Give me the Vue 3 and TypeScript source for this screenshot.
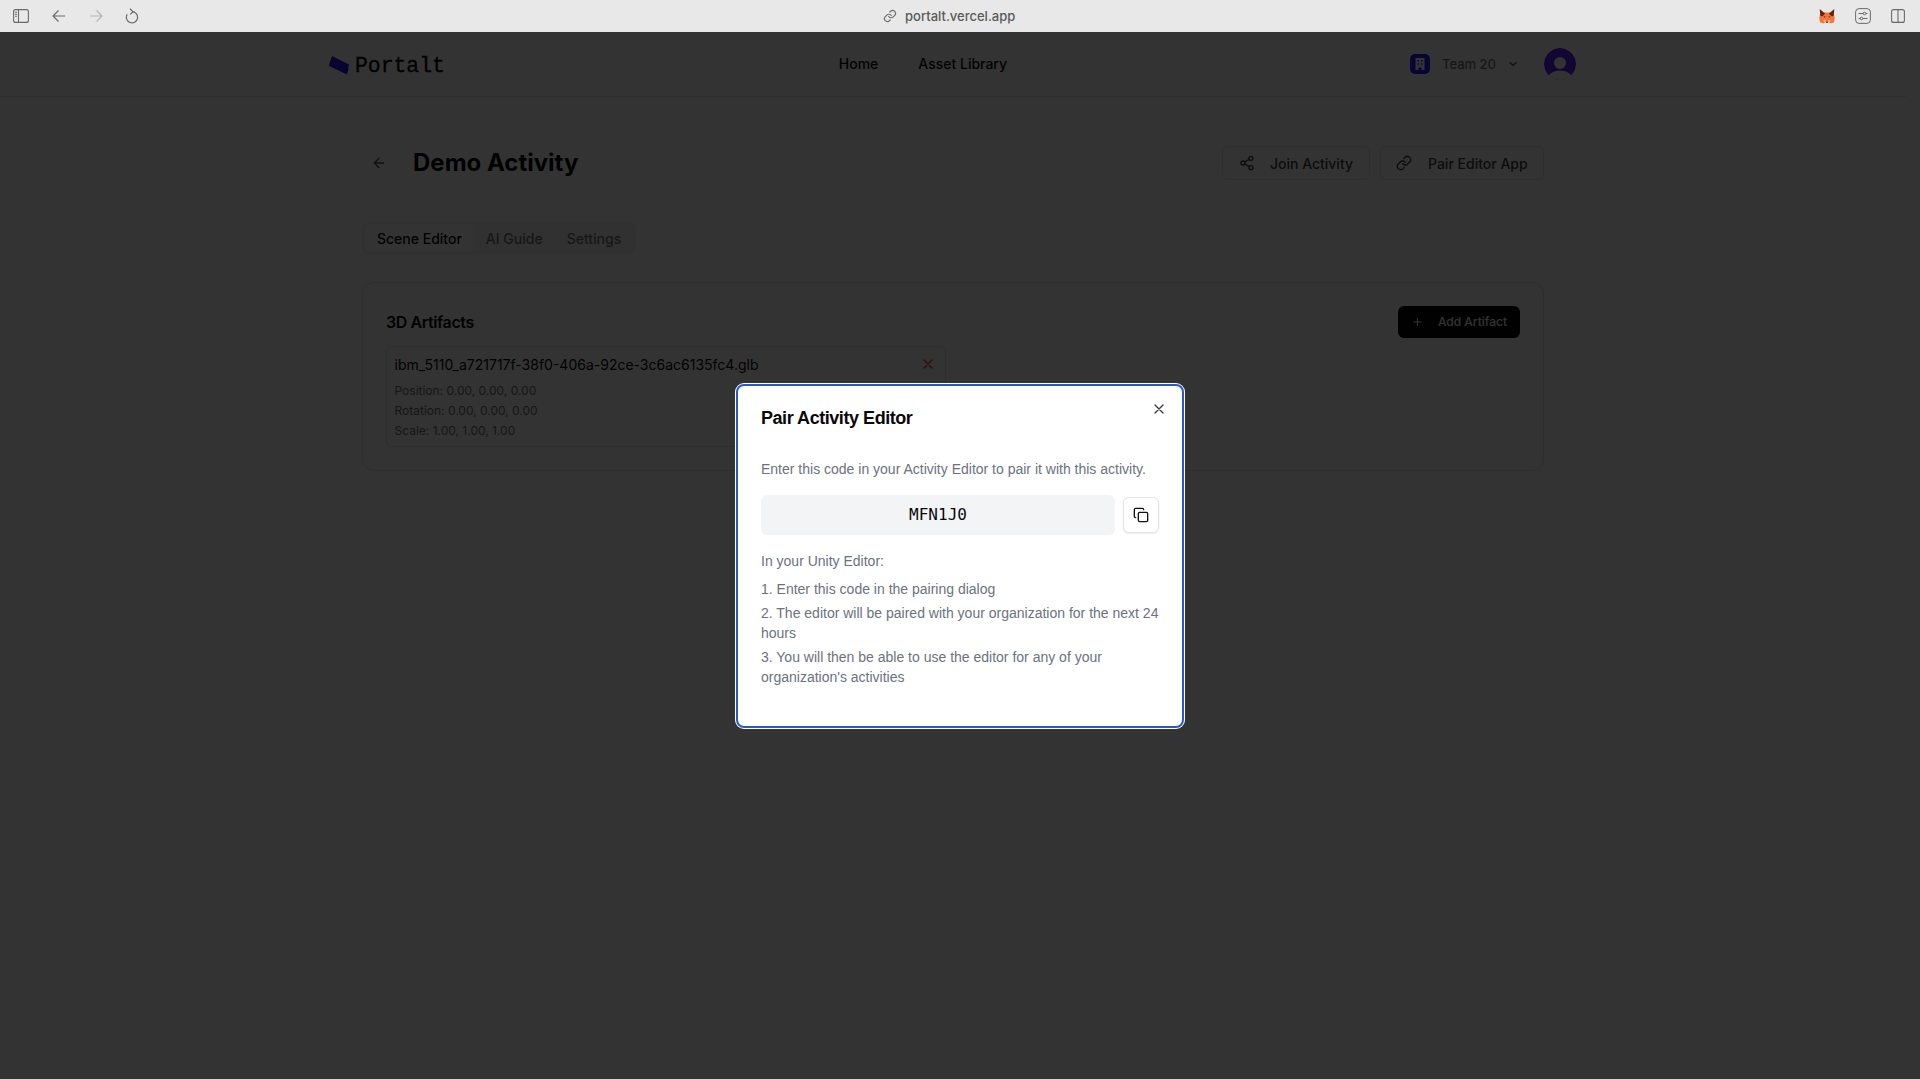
<script setup lang="ts">
const tabs: { label: string; active: boolean }[] = [
  { label: 'Scene Editor', active: true },
  { label: 'AI Guide', active: false },
  { label: 'Settings', active: false },
]
const steps: string[] = [
  '1. Enter this code in the pairing dialog',
  '2. The editor will be paired with your organization for the next 24 hours',
  "3. You will then be able to use the editor for any of your organization's activities",
]
</script>

<template>
  <div class="root">
    <div class="chrome">
      <div class="chrome-left">
        <svg class="ci" width="16" height="14" viewBox="0 0 16 14" fill="none" stroke="#6a6a6a" stroke-width="1.1">
          <rect x="0.6" y="0.6" width="14.8" height="12.8" rx="2" />
          <path d="M5.5 .6v12.8" />
          <path d="M2 3.2h2M2 5.2h2M2 7.2h2" />
        </svg>
        <svg class="ci" width="14" height="14" viewBox="0 0 14 14" fill="none" stroke="#6a6a6a" stroke-width="1.2">
          <path d="M13 7H1M6.500 1.500 1 7l5.500 5.500" />
        </svg>
        <svg class="ci" width="14" height="14" viewBox="0 0 14 14" fill="none" stroke="#b4b4b4" stroke-width="1.200">
          <path d="M1 7h12M7.500 1.500 13 7l-5.500 5.500" />
        </svg>
        <svg class="ci" width="14" height="16" viewBox="0 0 14 16" fill="none" stroke="#6a6a6a" stroke-width="1.2">
          <path d="M7 3.700A5.600 5.600 0 1 1 2.200 6.400" />
          <path d="M5 .8 8 3.700 5.300 6.400" />
        </svg>
      </div>
      <div class="url">
        <svg width="14" height="14" viewBox="0 0 24 24" fill="none" stroke="#6e6e6e" stroke-width="2" stroke-linecap="round">
          <path d="M10 13a5 5 0 0 0 7.500.5l3-3a5 5 0 0 0-7-7l-1.700 1.700" />
          <path d="M14 11a5 5 0 0 0-7.500-.5l-3 3a5 5 0 0 0 7 7l1.700-1.700" />
        </svg>
        <span>portalt.vercel.app</span>
      </div>
      <div class="chrome-right">
        <svg width="16" height="15" viewBox="0 0 16 15">
          <path fill="#f4763a" d="M1 5 4 3.500H12L15 5 15.700 9 15 13.500 11 14.500 9.500 13H6.500L5 14.500 1 13.500 .3 9Z" />
          <path fill="#5e2410" d="M0.700 0 6.200 4.800 3 7.500 1.300 6.500ZM15.300 0 9.800 4.800 13 7.500 14.700 6.500Z" />
          <path fill="#fbb48a" d="M4.500 11 7 11 6.500 13.500H5ZM9 11 11.500 11 11 13.500H9.500Z" />
          <path fill="#2e2420" d="M4.500 7.500 6.500 7.500 6 8.800ZM11.500 7.500 9.500 7.500 10 8.800ZM7 12.800H9V13.800H7Z" />
        </svg>
        <svg width="16" height="16" viewBox="0 0 16 16" fill="none" stroke="#6a6a6a" stroke-width="1">
          <rect x="0.600" y="0.600" width="14.800" height="14.800" rx="3.500" />
          <path d="M3.500 5.500h9M3.500 10.500h9" />
          <circle cx="9.500" cy="5.500" r="1.300" fill="#e8e8e8" />
          <circle cx="6.500" cy="10.500" r="1.300" fill="#e8e8e8" />
        </svg>
        <svg width="14" height="14" viewBox="0 0 14 14" fill="none" stroke="#6a6a6a" stroke-width="1.100">
          <rect x="0.600" y="0.600" width="12.800" height="12.800" rx="2" />
          <path d="M7 .6v12.800" />
        </svg>
      </div>
    </div>

    <div class="page">
      <header class="site-header">
        <div class="site-inner">
          <div class="logo">
            <svg width="20" height="19" viewBox="0 0 20 19">
              <path fill="#2414f0" d="M3 0 20 8.500 19 12.500 19.500 13 18 18.500 0 10 1 5.500Z" />
            </svg>
            <span>Portalt</span>
          </div>
          <nav class="nav">
            <a>Home</a>
            <a>Asset Library</a>
          </nav>
          <div class="account">
            <span class="team-icon">
              <svg width="14" height="14" viewBox="0 0 14 14">
                <path fill="#fff" d="M2.500 1h9v12H8.500V10.500h-3V13H2.500Z" />
                <path fill="#2a14ff" d="M4.500 3h1.500v1.500H4.500ZM8 3h1.500v1.500H8ZM4.500 6.200h1.500v1.500H4.500ZM8 6.200h1.500v1.500H8Z" />
              </svg>
            </span>
            <span class="team-name">Team 20</span>
            <svg class="chev" width="12" height="12" viewBox="0 0 24 24" fill="none" stroke="#52525b" stroke-width="2.200" stroke-linecap="round" stroke-linejoin="round">
              <path d="m6 9 6 6 6-6" />
            </svg>
            <span class="avatar">
              <svg width="32" height="32" viewBox="0 0 32 32">
                <circle cx="16" cy="16" r="16" fill="#5a1eff" />
                <circle cx="16" cy="15" r="6" fill="#fff" />
                <path fill="#fff" d="M3 32c1-6 6-9.500 13-9.500S28 26 29 32Z" />
              </svg>
            </span>
          </div>
        </div>
      </header>

      <main class="main">
        <div class="title-row">
          <div class="title-left">
            <svg width="16" height="16" viewBox="0 0 24 24" fill="none" stroke="#52525b" stroke-width="2" stroke-linecap="round" stroke-linejoin="round">
              <path d="m12 19-7-7 7-7" /><path d="M19 12H5" />
            </svg>
            <h1>Demo Activity</h1>
          </div>
          <div class="title-actions">
            <button class="btn-outline join">
              <svg width="16" height="16" viewBox="0 0 24 24" fill="none" stroke="#3f3f46" stroke-width="2" stroke-linecap="round" stroke-linejoin="round">
                <circle cx="18" cy="5" r="3" /><circle cx="6" cy="12" r="3" /><circle cx="18" cy="19" r="3" />
                <path d="m8.590 13.510 6.830 3.980M15.410 6.510l-6.820 3.980" />
              </svg>
              <span>Join Activity</span>
            </button>
            <button class="btn-outline pair">
              <svg width="16" height="16" viewBox="0 0 24 24" fill="none" stroke="#3f3f46" stroke-width="2" stroke-linecap="round" stroke-linejoin="round">
                <path d="M10 13a5 5 0 0 0 7.540.54l3-3a5 5 0 0 0-7.070-7.070l-1.720 1.710" />
                <path d="M14 11a5 5 0 0 0-7.540-.54l-3 3a5 5 0 0 0 7.070 7.070l1.710-1.710" />
              </svg>
              <span>Pair Editor App</span>
            </button>
          </div>
        </div>

        <div class="tabs">
          <button v-for="t in tabs" :key="t.label" class="tab" :class="{ active: t.active }">{{ t.label }}</button>
        </div>

        <section class="card">
          <div class="card-head">
            <h2>3D Artifacts</h2>
            <button class="btn-primary">
              <svg width="14" height="14" viewBox="0 0 24 24" fill="none" stroke="#fafafa" stroke-width="2" stroke-linecap="round">
                <path d="M5 12h14M12 5v14" />
              </svg>
              <span>Add Artifact</span>
            </button>
          </div>
          <div class="artifact">
            <div class="artifact-head">
              <span class="file">ibm_5110_a721717f-38f0-406a-92ce-3c6ac6135fc4.glb</span>
              <svg width="16" height="16" viewBox="0 0 24 24" fill="none" stroke="#ef4444" stroke-width="2" stroke-linecap="round">
                <path d="M18 6 6 18M6 6l12 12" />
              </svg>
            </div>
            <div class="meta">Position: 0.00, 0.00, 0.00</div>
            <div class="meta">Rotation: 0.00, 0.00, 0.00</div>
            <div class="meta">Scale: 1.00, 1.00, 1.00</div>
          </div>
        </section>
      </main>

      <div class="overlay">
        <div class="modal">
          <button class="close" aria-label="Close">
            <svg width="16" height="16" viewBox="0 0 24 24" fill="none" stroke="#3c3c3c" stroke-width="2" stroke-linecap="round">
              <path d="M18 6 6 18M6 6l12 12" />
            </svg>
          </button>
          <h3>Pair Activity Editor</h3>
          <p class="desc">Enter this code in your Activity Editor to pair it with this activity.</p>
          <div class="code-row">
            <div class="code">MFN1J0</div>
            <button class="copy" aria-label="Copy">
              <svg width="16" height="16" viewBox="0 0 24 24" fill="none" stroke="#111" stroke-width="2" stroke-linecap="round" stroke-linejoin="round">
                <rect x="8" y="8" width="14" height="14" rx="2" />
                <path d="M4 16c-1.100 0-2-.9-2-2V4c0-1.100.9-2 2-2h10c1.100 0 2 .9 2 2" />
              </svg>
            </button>
          </div>
          <p class="intro">In your Unity Editor:</p>
          <ol class="steps">
            <li v-for="s in steps" :key="s">{{ s }}</li>
          </ol>
        </div>
      </div>
    </div>
  </div>
</template>

<style>
html, body { margin: 0; background: #fff; overflow: hidden; }
</style>

<style scoped>
.root { height: 1079px; display: flex; flex-direction: column; font-family: Inter, "Liberation Sans", sans-serif; color: #09090b; overflow: hidden; }
button { font-family: inherit; cursor: pointer; white-space: nowrap; }

.chrome { height: 32px; flex: none; background: #e8e8e8; display: flex; align-items: center; }
.chrome-left { width: 883px; box-sizing: border-box; display: flex; align-items: center; padding-left: 13px; }
.chrome-left .ci:nth-child(1) { margin-right: 23px; }
.chrome-left .ci:nth-child(2) { margin-right: 23px; }
.chrome-left .ci:nth-child(3) { margin-right: 22px; }
.url { display: flex; align-items: center; gap: 8px; font-size: 13px; font-weight: 500; color: #5a5a5a; }
.chrome-right { margin-left: auto; display: flex; align-items: center; gap: 20px; padding-right: 15px; }

.page { flex: 1; position: relative; padding-right: 14px; min-height: 0; }
.site-header { height: 64px; border-bottom: 1px solid #e4e4e7; }
.site-inner { width: 1280px; margin: 0 auto; height: 100%; padding: 0 17px 0 16px; box-sizing: border-box; display: flex; align-items: center; justify-content: space-between; }
.logo { display: flex; align-items: center; gap: 6px; font-family: "Liberation Mono", monospace; font-size: 21.400px; color: #09090b; -webkit-text-stroke: 0.35px #09090b; }
.logo span { position: relative; top: 2px; }
.logo svg { position: relative; top: 1px; }
.nav { display: flex; gap: 40px; font-size: 14px; font-weight: 500; margin-right: 9px; color: #09090b; line-height: 20px; padding-bottom: 1px; }
.account { display: flex; align-items: center; font-size: 13px; color: #71717a; font-weight: 500; }
.team-icon { width: 20px; height: 20px; border-radius: 5px; background: #2a14ff; display: flex; align-items: center; justify-content: center; margin-right: 12px; }
.chev { margin-left: 11px; margin-right: 25px; }
.avatar { width: 32px; height: 32px; display: block; border-radius: 50%; overflow: hidden; }
.avatar svg { display: block; }

.main { width: 1182px; margin: 0 auto; padding-top: 49px; }
.title-row { display: flex; align-items: center; justify-content: space-between; height: 34px; }
.title-left { display: flex; align-items: center; gap: 26px; padding-left: 9px; }
h1 { margin: 0; font-size: 24px; font-weight: 700; line-height: 32px; }
.title-actions { display: flex; gap: 10px; }
.btn-outline { height: 34px; box-sizing: border-box; display: flex; align-items: center; background: #fff; border: 1px solid #e4e4e7; border-radius: 6px; font-size: 14px; font-weight: 500; color: #3f3f46; }
.join { width: 148px; padding: 0 16px; gap: 15px; }
.pair { width: 164px; padding: 0 15px; gap: 16px; }

.tabs { margin-top: 43px; width: 274px; height: 32px; box-sizing: border-box; padding: 1px 3px 3px; background: #f4f4f5; border-radius: 6px; display: flex; gap: 0; }
.tab { border: 0; background: none; padding: 0 12px; border-radius: 5px; font-size: 14px; font-weight: 500; color: #71717a; height: 28px; }
.tab.active { background: #fff; color: #09090b; }

.card { margin-top: 27px; border: 1px solid #e4e4e7; border-radius: 12px; padding: 23px; background: #fff; }
.card-head { display: flex; align-items: center; justify-content: space-between; height: 32px; }
h2 { margin: 0; font-size: 16px; font-weight: 600; line-height: 24px; letter-spacing: -0.025em; }
.btn-primary { height: 32px; width: 122px; box-sizing: border-box; padding: 0 13px 1px; display: flex; align-items: center; gap: 14px; background: #09090b; color: #fafafa; border: 0; border-radius: 6px; font-size: 12px; font-weight: 500; }
.artifact { margin-top: 8px; width: 560px; height: 101px; box-sizing: border-box; border: 1px solid #e4e4e7; border-radius: 6px; padding: 7px 7.500px; }
.artifact-head { display: flex; align-items: center; justify-content: space-between; height: 20px; padding-right: 2px; margin-bottom: 7px; }
.file { font-size: 14px; color: #09090b; }
.meta { font-size: 12px; line-height: 20px; color: #71717a; }

.overlay { position: absolute; inset: 0; background: rgba(0, 0, 0, 0.8); display: flex; align-items: center; justify-content: center; }
.modal { position: relative; width: 448px; height: 344px; box-sizing: border-box; padding: 25px; background: #fff; border-radius: 8px; font-family: "Liberation Sans", Arial, sans-serif; color: #6b7280; font-size: 14px; line-height: 20px; box-shadow: inset 0 0 0 2px #2a5bc4, 0 0 0 1px #fff; }
h3 { margin: 0; font-size: 18px; line-height: 18px; font-weight: 700; color: #09090b; letter-spacing: -0.025em; }
.close { position: absolute; right: 17px; top: 17px; width: 16px; height: 16px; padding: 0; border: 0; background: none; display: flex; }
.desc { margin: 32px 0 0; }
.code-row { margin-top: 16px; display: flex; align-items: center; gap: 8px; }
.code { flex: 1; height: 40px; background: #f3f4f6; border-radius: 6px; display: flex; align-items: center; justify-content: center; font-family: "DejaVu Sans Mono", monospace; font-size: 16px; color: #09090b; }
.copy { width: 36px; height: 36px; padding: 0; display: flex; align-items: center; justify-content: center; background: #fff; border: 1px solid #e4e4e7; border-radius: 6px; box-shadow: 0 1px 2px rgba(0,0,0,.08); }
.intro { margin: 16px 0 0; }
.steps { list-style: none; margin: 8px 0 0; padding: 0; display: flex; flex-direction: column; gap: 4px; }
</style>
